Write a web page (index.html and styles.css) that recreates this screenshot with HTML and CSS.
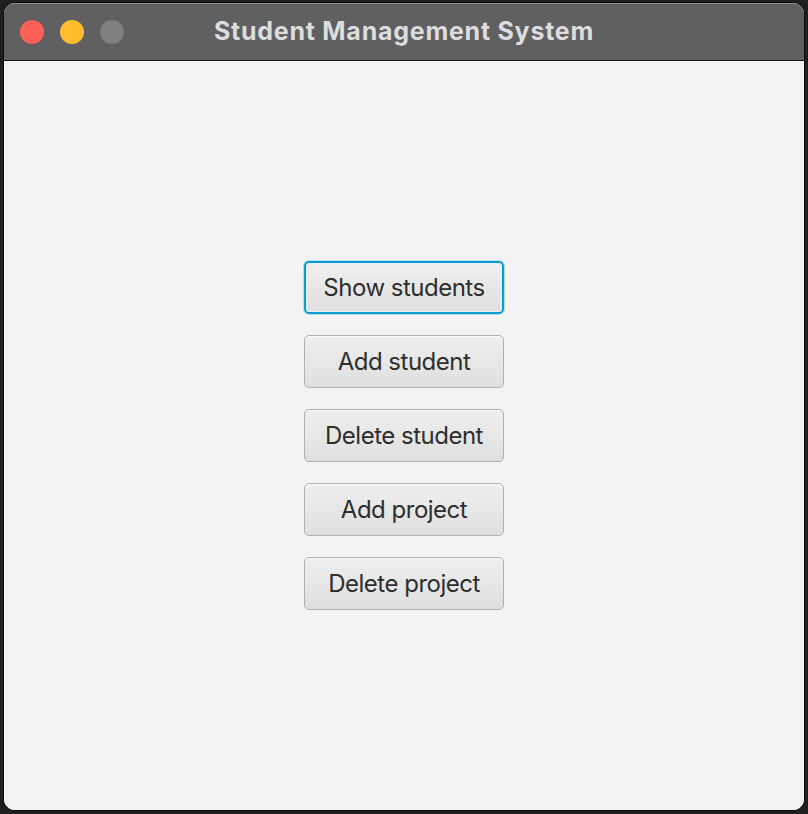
FILE: index.html
```html
<!DOCTYPE html>
<html>
<head>
<meta charset="utf-8">
<title>Student Management System</title>
<link rel="stylesheet" href="styles.css">
</head>
<body>
<div class="window">
  <div class="titlebar">
    <div class="lights">
      <span class="light red"></span>
      <span class="light yellow"></span>
      <span class="light gray"></span>
    </div>
    <div class="title">Student Management System</div>
  </div>
  <div class="content">
    <div class="menu">
      <button class="btn focused">Show students</button>
      <button class="btn">Add student</button>
      <button class="btn">Delete student</button>
      <button class="btn">Add project</button>
      <button class="btn">Delete project</button>
    </div>
  </div>
</div>
</body>
</html>
```
FILE: styles.css
```css
html, body {
  margin: 0;
  padding: 0;
  background: #1f1f1f;
  width: 808px;
  height: 814px;
  overflow: hidden;
}
body {
  padding: 3px 0 0 4px;
  box-sizing: border-box;
}
.window {
  width: 800px;
  height: 807px;
  border-radius: 11px;
  overflow: hidden;
  display: flex;
  flex-direction: column;
  background: #f3f3f3;
  box-shadow: 0 0 0 1px #0c0c0c;
}
.titlebar {
  height: 58px;
  flex: none;
  background: #5f6062;
  border-top: 1px solid #8d8e90;
  border-bottom: 1px solid #141414;
  box-sizing: border-box;
  position: relative;
  display: flex;
  align-items: center;
  justify-content: center;
}
.lights {
  position: absolute;
  left: 16px;
  top: 16px;
  display: flex;
  gap: 16px;
}
.light {
  width: 24px;
  height: 24px;
  border-radius: 50%;
  display: block;
}
.red { background: #fe5f57; }
.yellow { background: #febc2e; }
.gray { background: #808083; }
.title {
  font-family: Inter, "Liberation Sans", sans-serif;
  font-weight: 700;
  font-size: 25px;
  letter-spacing: 0.75px;
  color: #dddddd;
  margin-top: -2px;
  margin-left: 0;
}
.content {
  flex: 1;
  display: flex;
  align-items: center;
  justify-content: center;
  background: #f3f3f3;
}
.menu {
  display: flex;
  flex-direction: column;
  gap: 21px;
  margin-top: -1px;
}
.btn {
  width: 200px;
  height: 53px;
  box-sizing: border-box;
  border: 1px solid #b0b0b0;
  border-radius: 5px;
  background: linear-gradient(#efefef, #dfdfdf);
  box-shadow: inset 0 1px 0 #fafafa;
  font-family: Inter, "Noto Sans", sans-serif;
  font-size: 24px;
  letter-spacing: -0.5px;
  color: #2e2e2e;
  padding: 1px 0 0 0;
  cursor: default;
}
.btn.focused {
  border: 2px solid #0a9bd5;
  box-shadow: 0 0 0 1px #b8dcec, inset 0 0 0 1px #e8f3f8;
}
```
